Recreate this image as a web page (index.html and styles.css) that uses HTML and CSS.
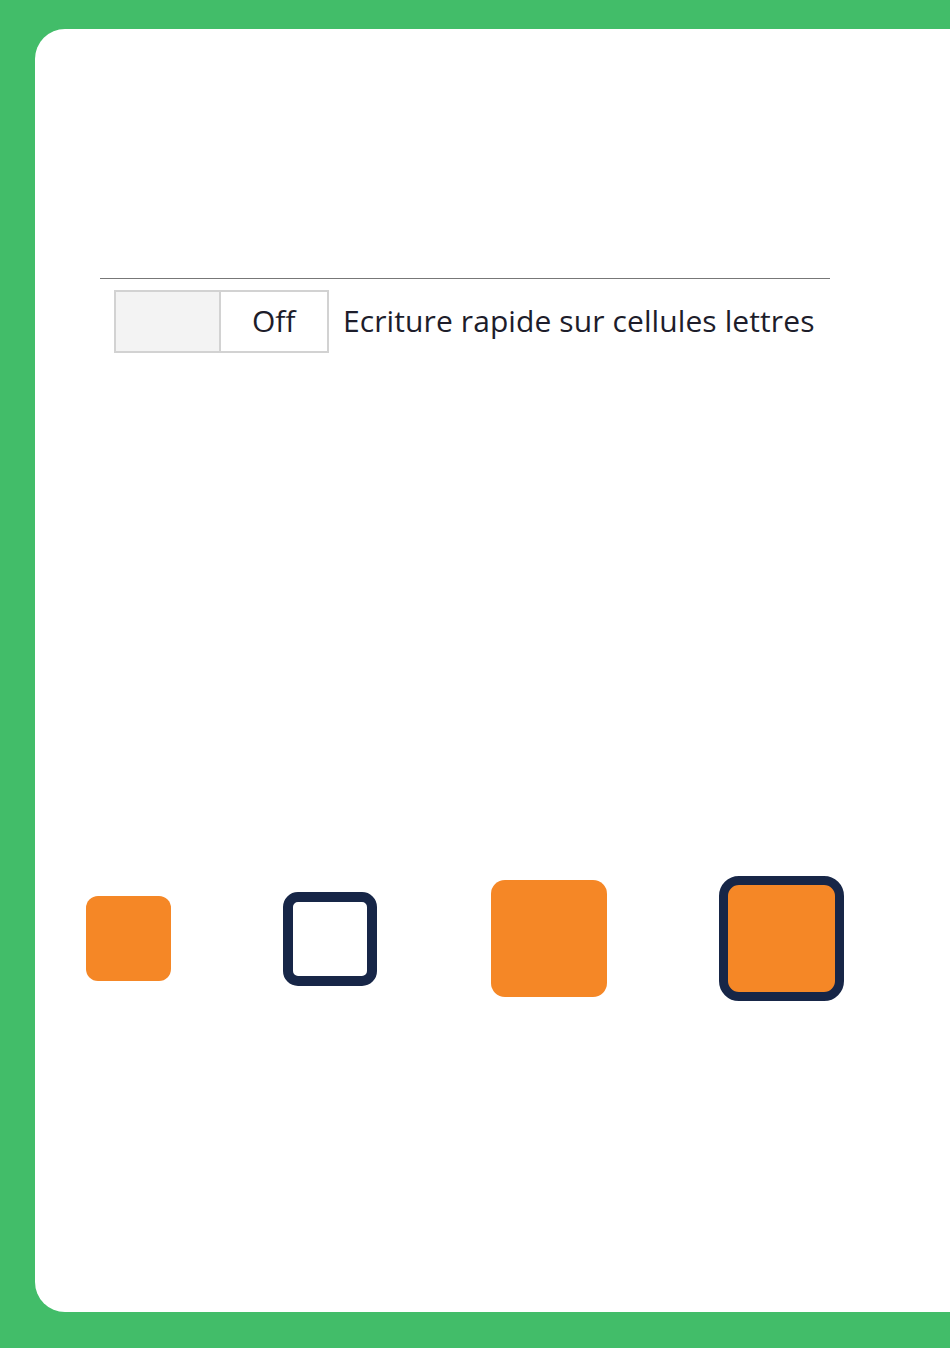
FILE: index.html
```html
<!DOCTYPE html>
<html lang="fr">
<head>
<meta charset="utf-8">
<link rel="stylesheet" href="styles.css">
</head>
<body>
<div class="frame">
  <div class="panel">
    <div class="rule"></div>
    <div class="setting">
      <div class="toggle">
        <div class="toggle-knob"></div>
        <div class="toggle-label">Off</div>
      </div>
      <span class="setting-text">Ecriture rapide sur cellules lettres</span>
    </div>
    <div class="squares">
      <div class="sq sq-fill-sm"></div>
      <div class="sq sq-outline"></div>
      <div class="sq sq-fill-lg"></div>
      <div class="sq sq-both"></div>
    </div>
  </div>
</div>
</body>
</html>
```
FILE: styles.css
```css
html, body {
  margin: 0;
  padding: 0;
}
body {
  background: #42bd69;
  width: 950px;
  height: 1348px;
  overflow: hidden;
  font-family: "Open Sans", "Noto Sans", sans-serif;
}
.frame {
  padding: 29px 0 0 35px;
}
.panel {
  background: #ffffff;
  height: 1283px;
  width: 960px;
  border-radius: 30px 0 0 30px;
  padding-top: 249px;
  box-sizing: border-box;
}
.rule {
  margin-left: 65px;
  width: 730px;
  height: 1px;
  background: #777777;
}
.setting {
  margin-top: 11px;
  margin-left: 79px;
  display: flex;
  align-items: center;
  gap: 14px;
}
.toggle {
  display: flex;
  width: 215px;
  height: 63px;
  border: 2px solid #d2d2d2;
  box-sizing: border-box;
}
.toggle-knob {
  width: 103px;
  background: #f3f3f3;
  border-right: 2px solid #d2d2d2;
}
.toggle-label {
  flex: 1;
  display: flex;
  align-items: center;
  padding-left: 31px;
  font-size: 30px;
  color: #1d1d2b;
  padding-bottom: 2px;
}
.setting-text {
  font-size: 30px;
  color: #1d1d2b;
  letter-spacing: 0.1px;
  padding-bottom: 2px;
}
.squares {
  margin-top: 523px;
  margin-left: 51px;
  display: flex;
  align-items: center;
  height: 125px;
}
.sq {
  box-sizing: border-box;
  flex: none;
}
.sq-fill-sm {
  width: 85px;
  height: 85px;
  background: #f58726;
  border-radius: 12px;
}
.sq-outline {
  margin-left: 112px;
  width: 94px;
  height: 94px;
  border: 10px solid #172647;
  border-radius: 15px;
}
.sq-fill-lg {
  margin-left: 114px;
  width: 116px;
  height: 117px;
  background: #f58726;
  border-radius: 14px;
}
.sq-both {
  margin-left: 112px;
  width: 125px;
  height: 125px;
  background: #f58726;
  border: 9px solid #172647;
  border-radius: 20px;
}
```
